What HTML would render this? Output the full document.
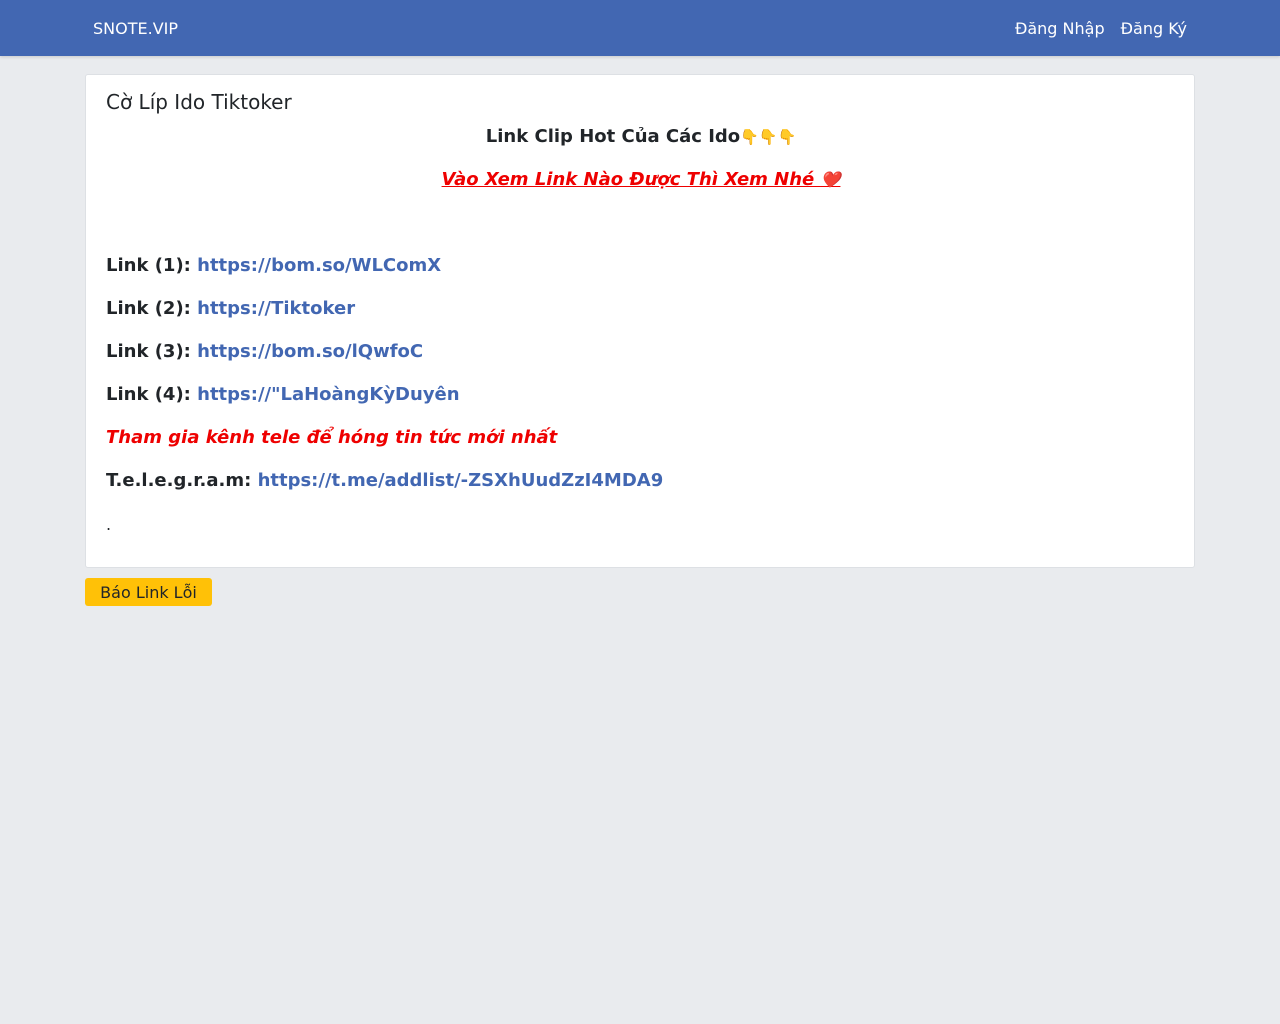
<!DOCTYPE html>
<html><head><meta charset="utf-8"><style>
body{margin:0;background:#e9ebee;font-family:"DejaVu Sans","Liberation Sans",sans-serif;color:#212529}
.nav{height:56px;background:#4267b2;color:#fff;position:relative;box-shadow:0 1px 3px rgba(0,0,0,.15)}
.nav .b{position:absolute;left:93px;top:19px;font-size:16px}
.nav .r{position:absolute;right:93px;top:19px;font-size:16px}
.nav .r span{margin-left:16px}
.card{position:absolute;left:85px;top:74px;width:1108px;height:492px;background:#fff;border:1px solid #dde0e4;border-radius:3px}
.t{position:absolute;left:20px;top:15px;font-size:20px}
.c{position:absolute;left:20px;width:1070px;font-size:18px;font-weight:bold;line-height:20px}
.ctr{text-align:center}
a{color:#4267b2;text-decoration:none}
.red{color:#e00;font-style:italic}
.btn{position:absolute;left:85px;top:578px;width:127px;height:28px;background:#ffc107;border-radius:3px;font-size:16px;text-align:center;line-height:29px}
</style></head><body>
<div class="nav"><div class="b">SNOTE.VIP</div><div class="r"><span>Đăng Nhập</span><span>Đăng Ký</span></div></div>
<div class="card">
<div class="t">Cờ Líp Ido Tiktoker</div>
<div class="c ctr" style="top:52px">Link Clip Hot Của Các Ido<span style="color:#f5c842;font-size:15px">👇👇👇</span></div>
<div class="c ctr red" style="top:95px;text-decoration:underline">Vào Xem Link Nào Được Thì Xem Nhé <span style="font-size:16px">❤️</span></div>
<div class="c" style="top:181px">Link (1): <a>https://bom.so/WLComX</a></div>
<div class="c" style="top:224px">Link (2): <a>https://Tiktoker</a></div>
<div class="c" style="top:267px">Link (3): <a>https://bom.so/lQwfoC</a></div>
<div class="c" style="top:310px">Link (4): <a>https://"LaHoàngKỳDuyên</a></div>
<div class="c red" style="top:353px">Tham gia kênh tele để hóng tin tức mới nhất</div>
<div class="c" style="top:396px">T.e.l.e.g.r.a.m: <a>https://t.me/addlist/-ZSXhUudZzI4MDA9</a></div>
<div class="c" style="top:440px;font-weight:normal;font-size:16px">.</div>
</div>
<div class="btn">Báo Link Lỗi</div>
</body></html>
